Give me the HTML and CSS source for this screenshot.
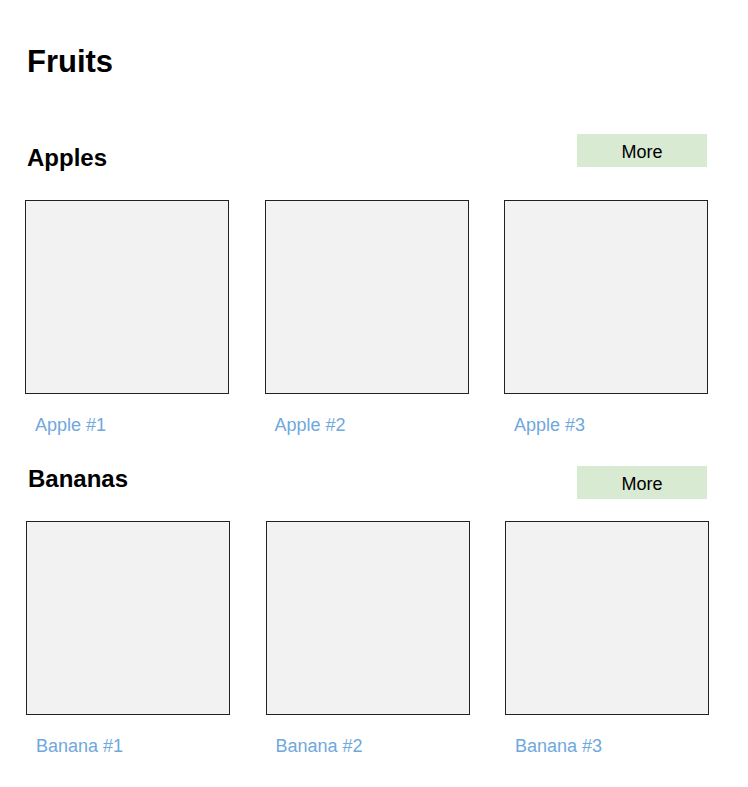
FILE: index.html
```html
<!DOCTYPE html>
<html lang="en">
<head>
<meta charset="utf-8">
<title>Fruits</title>
<link rel="stylesheet" href="styles.css">
</head>
<body>
<main class="page">
  <h1 class="page-title">Fruits</h1>

  <section class="section section--apples">
    <header class="section-head">
      <h2 class="section-title">Apples</h2>
      <button class="more-btn" type="button">More</button>
    </header>
    <div class="grid">
      <div class="item">
        <div class="thumb"></div>
        <a class="item-label" href="#">Apple #1</a>
      </div>
      <div class="item">
        <div class="thumb"></div>
        <a class="item-label" href="#">Apple #2</a>
      </div>
      <div class="item">
        <div class="thumb"></div>
        <a class="item-label" href="#">Apple #3</a>
      </div>
    </div>
  </section>

  <section class="section section--bananas">
    <header class="section-head">
      <h2 class="section-title">Bananas</h2>
      <button class="more-btn" type="button">More</button>
    </header>
    <div class="grid">
      <div class="item">
        <div class="thumb"></div>
        <a class="item-label" href="#">Banana #1</a>
      </div>
      <div class="item">
        <div class="thumb"></div>
        <a class="item-label" href="#">Banana #2</a>
      </div>
      <div class="item">
        <div class="thumb"></div>
        <a class="item-label" href="#">Banana #3</a>
      </div>
    </div>
  </section>
</main>
</body>
</html>
```

FILE: styles.css
```css
* {
  box-sizing: border-box;
}

html, body {
  margin: 0;
  padding: 0;
  background: #ffffff;
}

body {
  font-family: "Liberation Sans", Arial, sans-serif;
  color: #000000;
}

.page {
  width: 748px;
  padding: 44px 39px 0 25px;
}

.page-title {
  margin: 0 0 0 2px;
  font-size: 31px;
  line-height: 36px;
  font-weight: bold;
}

.section {
  display: flex;
  flex-direction: column;
}

.section--apples {
  margin-top: 54px;
}

.section--bananas {
  margin-top: 29px;
}

.section-head {
  display: flex;
  justify-content: space-between;
  align-items: flex-start;
}

.section--apples .section-head {
  height: 66px;
}

.section--bananas .section-head {
  height: 56px;
}

.section-title {
  margin: 0 0 0 2px;
  font-size: 24px;
  line-height: 28px;
  font-weight: bold;
}

.section--apples .section-title {
  margin-top: 10px;
}

.section--bananas .section-title {
  margin-left: 3px;
}

.more-btn {
  width: 130px;
  height: 33px;
  margin: 0 2px 0 0;
  padding: 3px 0 0 0;
  border: none;
  background: #d9ead3;
  font-family: "Liberation Sans", Arial, sans-serif;
  font-size: 18px;
  color: #000000;
  cursor: pointer;
}

.section--bananas .more-btn {
  margin-top: 1px;
}

.grid {
  display: grid;
  grid-template-columns: repeat(3, 204px);
  column-gap: 35.5px;
}

.section--bananas .grid {
  margin-left: 1px;
}

.item {
  display: flex;
  flex-direction: column;
}

.thumb {
  width: 204px;
  height: 194px;
  border: 1px solid #222222;
  background: #f2f2f2;
}

.item-label {
  margin-top: 21px;
  padding-left: 10px;
  font-size: 18px;
  line-height: 21px;
  color: #6fa8dc;
  text-decoration: none;
}
```
